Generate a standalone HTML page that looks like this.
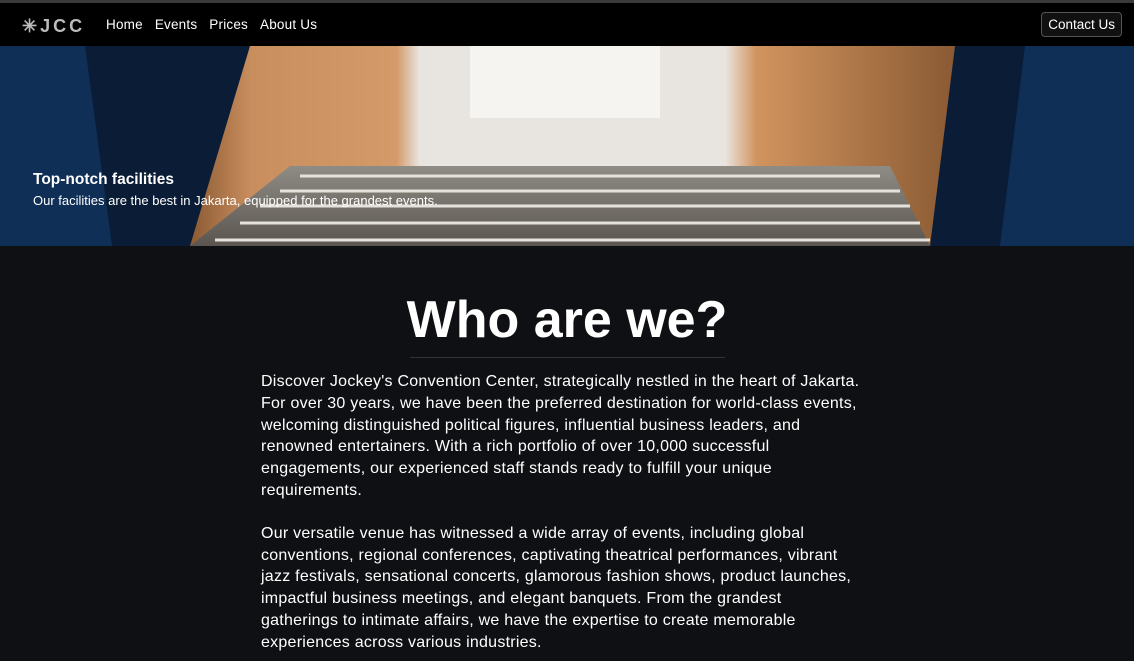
<!DOCTYPE html>
<html><head><style>
*{margin:0;padding:0;box-sizing:border-box}
body{width:1134px;height:661px;overflow:hidden;background:#0e1013;font-family:"Liberation Sans",sans-serif;color:#fff}
.top{height:3px;background:#3a3a3a}
nav{height:43px;background:#000;position:relative}
.logo{position:absolute;left:22px;top:13px;font-size:18px;letter-spacing:3px;color:#bbb;font-weight:bold}
.links{position:absolute;left:106px;top:14px;font-size:13.5px;letter-spacing:.2px}
.links span{margin-right:12px}
.btn{position:absolute;right:12px;top:9px;border:1px solid #555;border-radius:4px;padding:4px 6px;font-size:13.5px;background:#111}
.hero{position:relative;height:200px;background:#0f2f57;overflow:hidden}
.hero svg{position:absolute;left:0;top:0}
.ht{position:absolute;left:33px;top:125px}
.ht b{font-size:15.5px;display:block;margin-bottom:3px}
.ht span{font-size:13px}
h1{text-align:center;font-size:52px;font-weight:bold;margin-top:44px;line-height:60px}
hr{width:315px;margin:7px auto 0;border:0;border-top:1px solid #333}
p{margin:13px 0 0 261px;font-size:16px;line-height:21.8px;white-space:nowrap;letter-spacing:.25px}
p+p{margin-top:21px}
</style></head><body>
<div class="top"></div>
<nav><div class="logo">✳JCC</div>
<div class="links"><span>Home</span><span>Events</span><span>Prices</span><span>About Us</span></div>
<div class="btn">Contact Us</div></nav>
<div class="hero">
<svg width="1134" height="200">
<defs>
<linearGradient id="w" x1="0" x2="1"><stop offset="0" stop-color="#8a5a33"/><stop offset=".08" stop-color="#c98e5e"/><stop offset=".27" stop-color="#d49a6a"/><stop offset=".3" stop-color="#e8e4df"/><stop offset=".7" stop-color="#e8e4df"/><stop offset=".74" stop-color="#d2945f"/><stop offset="1" stop-color="#8a5a33"/></linearGradient>
<linearGradient id="f" x1="0" y1="0" x2="0" y2="1"><stop offset="0" stop-color="#8f8b85"/><stop offset="1" stop-color="#5a554f"/></linearGradient>
</defs>
<polygon points="85,0 250,0 190,200 112,200" fill="#0b1d36"/>
<polygon points="955,0 1025,0 1000,200 930,200" fill="#0b1d36"/>
<polygon points="250,0 955,0 930,200 190,200" fill="url(#w)"/>
<rect x="470" y="0" width="190" height="72" fill="#f6f4f0"/>
<polygon points="290,120 890,120 930,200 190,200" fill="url(#f)"/>
<g stroke="#e5e2dd" stroke-width="3">
<line x1="300" y1="130" x2="880" y2="130"/><line x1="280" y1="145" x2="900" y2="145"/>
<line x1="260" y1="160" x2="910" y2="160"/><line x1="240" y1="177" x2="920" y2="177"/><line x1="215" y1="194" x2="930" y2="194"/></g>
</svg>
<div class="ht"><b>Top-notch facilities</b><span>Our facilities are the best in Jakarta, equipped for the grandest events.</span></div>
</div>
<h1>Who are we?</h1>
<hr>
<p>Discover Jockey's Convention Center, strategically nestled in the heart of Jakarta.<br>For over 30 years, we have been the preferred destination for world-class events,<br>welcoming distinguished political figures, influential business leaders, and<br>renowned entertainers. With a rich portfolio of over 10,000 successful<br>engagements, our experienced staff stands ready to fulfill your unique<br>requirements.</p>
<p>Our versatile venue has witnessed a wide array of events, including global<br>conventions, regional conferences, captivating theatrical performances, vibrant<br>jazz festivals, sensational concerts, glamorous fashion shows, product launches,<br>impactful business meetings, and elegant banquets. From the grandest<br>gatherings to intimate affairs, we have the expertise to create memorable<br>experiences across various industries.</p>
</body></html>
